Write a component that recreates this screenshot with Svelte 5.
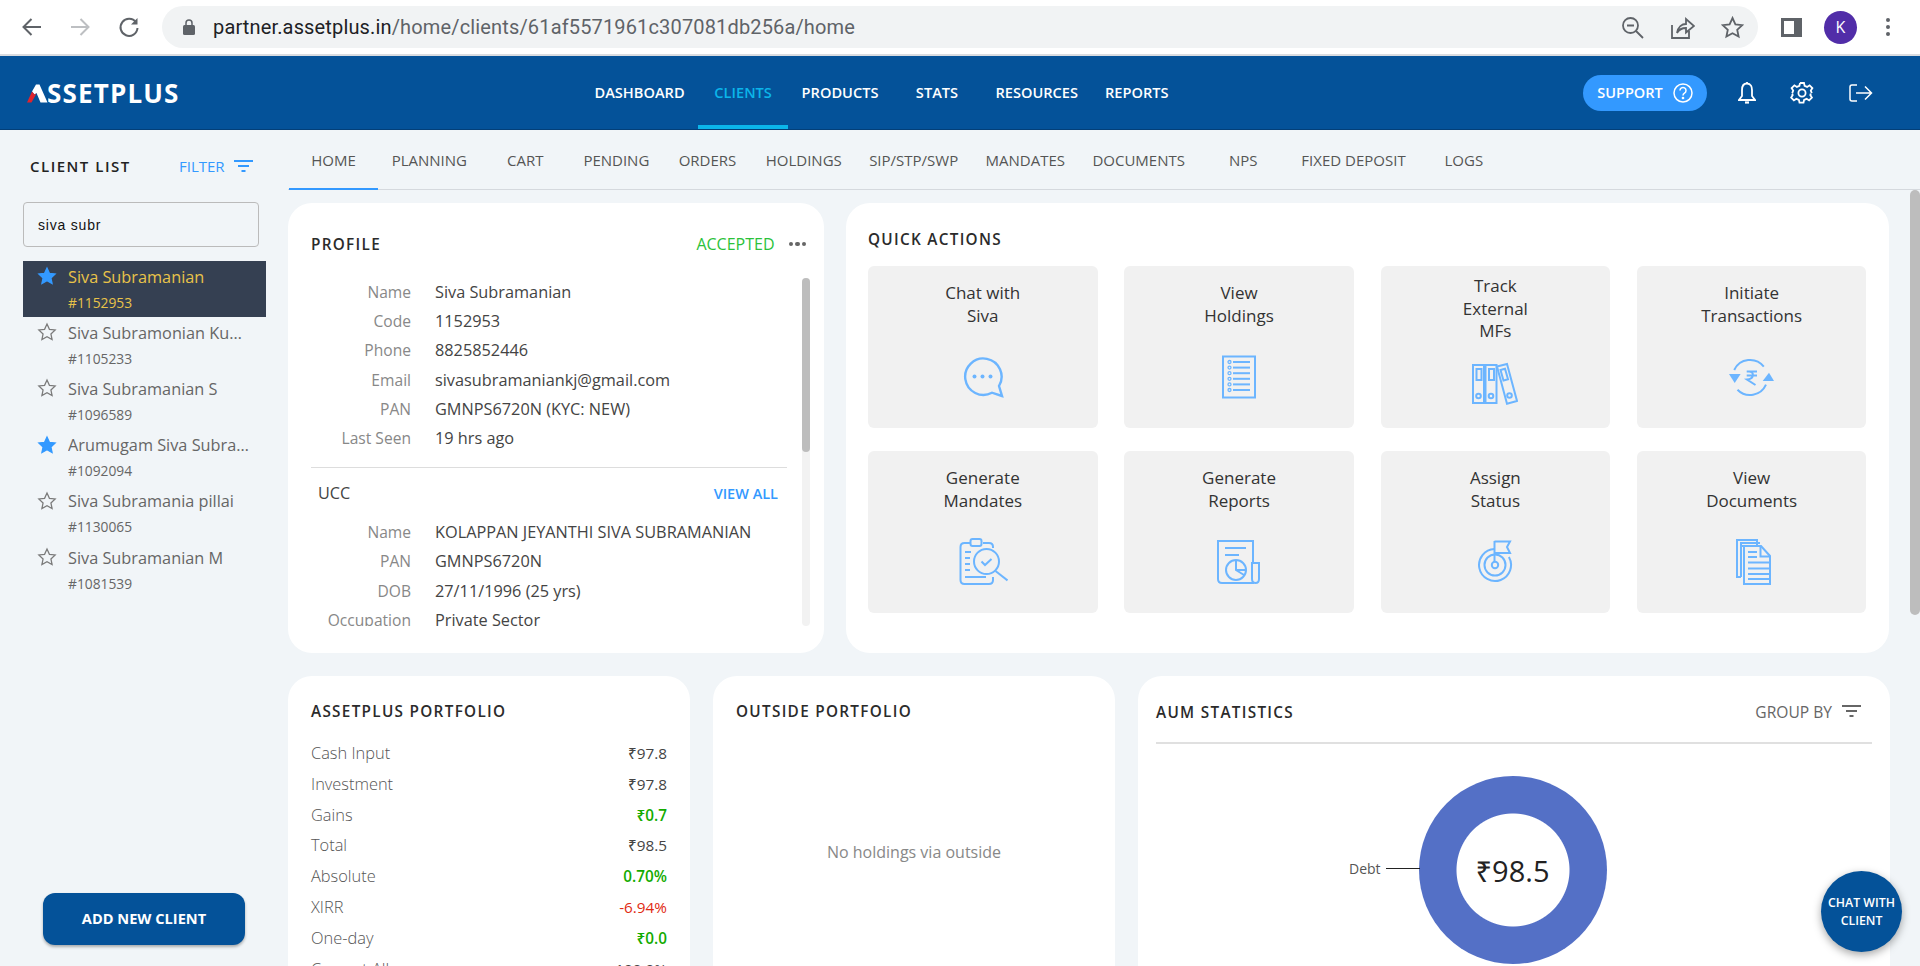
<script>
  const navItems = ['DASHBOARD', 'CLIENTS', 'PRODUCTS', 'STATS', 'RESOURCES', 'REPORTS'];
  const tabs = ['HOME', 'PLANNING', 'CART', 'PENDING', 'ORDERS', 'HOLDINGS', 'SIP/STP/SWP', 'MANDATES', 'DOCUMENTS', 'NPS', 'FIXED DEPOSIT', 'LOGS'];
  const clients = [
    { name: 'Siva Subramanian', code: '#1152953', fav: true, active: true },
    { name: 'Siva Subramonian Kumar', code: '#1105233' },
    { name: 'Siva Subramanian S', code: '#1096589' },
    { name: 'Arumugam Siva Subramanian', code: '#1092094', fav: true },
    { name: 'Siva Subramania pillai', code: '#1130065' },
    { name: 'Siva Subramanian M', code: '#1081539' }
  ];
  const profile = [
    ['Name', 'Siva Subramanian'], ['Code', '1152953'], ['Phone', '8825852446'],
    ['Email', 'sivasubramaniankj@gmail.com'], ['PAN', 'GMNPS6720N (KYC: NEW)'], ['Last Seen', '19 hrs ago']
  ];
  const ucc = [
    ['Name', 'KOLAPPAN JEYANTHI SIVA SUBRAMANIAN'], ['PAN', 'GMNPS6720N'],
    ['DOB', '27/11/1996 (25 yrs)'], ['Occupation', 'Private Sector']
  ];
  const portfolio = [
    ['Cash Input', '₹97.8', ''], ['Investment', '₹97.8', ''], ['Gains', '₹0.7', 'up'], ['Total', '₹98.5', ''],
    ['Absolute', '0.70%', 'up'], ['XIRR', '-6.94%', 'down'], ['One-day', '₹0.0', 'up'], ['Current All', '100.0%', '']
  ];
</script>

{#snippet tile(lines, icon)}
  <button class="tile" class:three={lines.length === 3}>
    <span class="tile-label">{#each lines as l}<span>{l}</span>{/each}</span>
    <span class="tile-icon">{@render icon()}</span>
  </button>
{/snippet}

{#snippet filterIcon()}
  <svg width="19" height="13" viewBox="0 0 19 13" fill="currentColor"><rect y="0" width="19" height="2"/><rect x="4" y="5" width="11" height="2"/><rect x="7.5" y="10" width="4" height="2"/></svg>
{/snippet}

{#snippet chatIcon()}
  <svg width="44" height="44" viewBox="0 0 44 44" class="qi heavy"><path d="M41 41l-10-3.300A18.200 18.200 0 1 1 38 31z"/><circle cx="13.500" cy="21.500" r="2" class="dot"/><circle cx="21.500" cy="21.500" r="2" class="dot"/><circle cx="29.500" cy="21.500" r="2" class="dot"/></svg>
{/snippet}
{#snippet holdingsIcon()}
  <svg width="44" height="44" viewBox="0 0 44 44" class="qi"><rect x="6" y="1.500" width="32" height="41"/>
    {#each [7, 12.600, 18.200, 23.800, 29.400, 35] as y}<circle cx="12.500" cy={y} r="1.500" stroke-width="1.300"/><path d="M16 {y}H33" />{/each}
  </svg>
{/snippet}
{#snippet binderIcon()}
  <svg width="46" height="44" viewBox="0 0 46 44" class="qi" stroke-width="1.800"><rect x="1" y="3" width="11" height="38"/><rect x="13.500" y="3" width="11" height="38"/><path d="M25 4.500l10-2.500 10 37-10 2.800z"/><rect x="4.500" y="7" width="5" height="11"/><rect x="17" y="7" width="5" height="11"/><path d="M28.500 8l4.500-1.200 3 10.500-4.500 1.200z"/><circle cx="6.500" cy="34" r="2.300"/><circle cx="19" cy="34" r="2.300"/><circle cx="37.500" cy="33.500" r="2.300"/></svg>
{/snippet}
{#snippet txnIcon()}
  <svg width="46" height="44" viewBox="0 0 46 44" class="qi"><path d="M5.200 15A17.500 17.500 0 0 1 34.800 11.700"/><path d="M37 29.600A17.500 17.500 0 0 1 8.500 34.700"/><path d="M0 19H11.600L5.700 28z" class="fill"/><path d="M33.700 26H45L40 17.700z" class="fill"/><path d="M17.700 16.500H28M17.700 20.500H28M20 16.500c5.500 0 5.500 7.500-2 8L26.500 30"/></svg>
{/snippet}
{#snippet mandateIcon()}
  <svg width="50" height="50" viewBox="0 0 50 50" class="qi"><path d="M12 6H6.500Q2.500 6 2.500 10V43Q2.500 47 6.500 47H31Q35 47 35 43V40"/><path d="M25 6H31Q35 6 35 10V11"/><rect x="12.500" y="2" width="11" height="7" rx="2"/><circle cx="28.500" cy="24.500" r="12.500"/><path d="M23.500 24.500l3.500 3.500 6.500-6"/><path d="M37.500 34l12 9.500"/><path d="M7 15h6M7 21h5M7 27h5M7 33h5M7 40h21"/></svg>
{/snippet}
{#snippet reportIcon()}
  <svg width="46" height="46" viewBox="0 0 46 46" class="qi"><path d="M37 24V2H2V40Q2 44 6 44H38"/><path d="M36 24H43V40Q43 44 39.500 44Q36 44 36 40z"/><path d="M9 9H30M9 16H23"/><circle cx="20" cy="31" r="10"/><path d="M20 21V31L28 36"/><path d="M20 31H30"/></svg>
{/snippet}
{#snippet statusIcon()}
  <svg width="36" height="46" viewBox="0 0 36 46" class="qi"><path d="M17.500 2V23"/><path d="M17.500 2.500H33L30 8l3 6H17.500" /><path d="M17.500 10A16 16 0 1 0 31.900 18"/><circle cx="18" cy="26" r="10.500"/><circle cx="18" cy="26" r="3.200"/></svg>
{/snippet}
{#snippet docsIcon()}
  <svg width="42" height="48" viewBox="0 0 42 48" class="qi"><path d="M10 39H6V2H26V8"/><path d="M10 39V5H29"/><path d="M10 8H30L39 18V46H13V8z"/><path d="M29.500 8.500V18.500H39M17 14H26M17 19H26M17 24.500H38M17 30.500H38M17 36H38M17 41H38"/></svg>
{/snippet}

<div class="app">
  <div class="browser">
    <div class="browser-btns">
      <svg width="20" height="20" viewBox="0 0 20 20" class="cr"><path d="M19 10H2M9.500 2L1.500 10l8 8"/></svg>
      <svg width="20" height="20" viewBox="0 0 20 20" class="cr dim"><path d="M1 10H18M10.500 2l8 8-8 8"/></svg>
      <svg width="22" height="22" viewBox="0 0 22 22" class="cr"><path d="M18 6.500A8.500 8.500 0 1 0 19.500 12"/><path d="M19.500 2v6.500H13" fill="#5f6368" stroke="none"/></svg>
    </div>
    <div class="omnibox">
      <svg width="12" height="16" viewBox="0 0 12 16" fill="#5f6368"><rect y="6" width="12" height="10" rx="1.500"/><path d="M3 6.500V4a3 3 0 0 1 6 0v2.500" fill="none" stroke="#5f6368" stroke-width="1.500"/></svg>
      <span class="url">partner.assetplus.in<span class="url-path">/home/clients/61af5571961c307081db256a/home</span></span>
      <span class="omni-icons">
        <svg width="23" height="23" viewBox="0 0 23 23" class="cr thin"><circle cx="9.500" cy="9.500" r="7.500"/><path d="M15 15l7 7M6 9.500h7"/></svg>
        <svg width="25" height="23" viewBox="0 0 25 23" class="cr thin"><path d="M2 9V22H19V15"/><path d="M7 17C8 11 12 8 16 8V3L24 10L16 16.500V12C12 12 9 13.500 7 17z"/></svg>
        <svg width="23" height="23" viewBox="0 0 23 23" class="cr thin"><path d="M11.500 2l2.900 6.300 6.900.8-5.100 4.700 1.400 6.800-6.100-3.400-6.100 3.400 1.400-6.800L1.700 9.100l6.900-.8z"/></svg>
      </span>
    </div>
    <svg width="21" height="21" viewBox="0 0 21 21" class="side-ic"><path fill-rule="evenodd" d="M0 1H21V20H0zM3 4V17H13V4z"/></svg>
    <span class="avatar">K</span>
    <svg width="6" height="22" viewBox="0 0 6 22" fill="#5f6368" class="kebab"><circle cx="3" cy="4" r="2"/><circle cx="3" cy="11" r="2"/><circle cx="3" cy="18" r="2"/></svg>
  </div>

  <header class="header">
    <div class="logo">
      <span class="logo-text">ASSETPLUS</span>
      <svg class="logo-mark" width="21" height="19" viewBox="0 0 21 19"><rect width="21" height="19" fill="#045299"/><path d="M9 0.500H12.500L20.500 18.500H13.500L9.500 9 7.500 10.500 5 7.500z" fill="#fff"/><path d="M0 18.500L5 7.500 7.500 10.500 9.500 9.500 4.500 18.500z" fill="#e1242d"/></svg>
    </div>
    <nav class="nav">
      {#each navItems as item}
        <a class="nav-item" class:active={item === 'CLIENTS'} href="#top">{item}</a>
      {/each}
    </nav>
    <div class="head-right">
      <button class="support">SUPPORT
        <svg width="20" height="20" viewBox="0 0 20 20" fill="none" stroke="#fff" stroke-width="1.500"><circle cx="10" cy="10" r="9"/><path d="M7 7.500a3 3 0 1 1 4.500 2.600c-1 .6-1.500 1.200-1.500 2.400"/><circle cx="10" cy="15" r=".6" fill="#fff"/></svg>
      </button>
      <svg class="hi bell" width="18" height="24" viewBox="0 0 18 24"><path d="M9 2.500C5 2.500 4 6 4 9V15L1 19H17L14 15V9C14 6 13 2.500 9 2.500z"/><path d="M7 21.500h4" stroke-width="2.200"/><path d="M9 1V2.500"/></svg>
      <svg class="hi gear" width="24" height="24" viewBox="0 0 24 24"><circle cx="12" cy="12" r="3.600"/><path d="M10 2h4l.6 2.900 2.500 1 2.500-1.600 2.800 2.800-1.600 2.500 1 2.500 0 0M10 2L9.400 4.900l-2.500 1-2.500-1.600-2.800 2.800 1.600 2.500-1 2.500M2.200 12.600l.5 1.500-1.600 2.500 2.800 2.800 2.500-1.600 2.500 1 .6 2.900h4l.6-2.900 2.500-1 2.500 1.600 2.800-2.800-1.600-2.500.5-1.500"/></svg>
      <svg class="hi out" width="24" height="20" viewBox="0 0 24 20"><path d="M8 2H3Q1 2 1 4V16Q1 18 3 18H8"/><path d="M7 10H22M16 3.500L22.500 10 16 16.500"/></svg>
    </div>
  </header>

  <div class="body">
    <aside class="side">
      <div class="side-head">
        <span class="side-title">CLIENT LIST</span>
        <span class="filter">FILTER {@render filterIcon()}</span>
      </div>
      <input class="search" value="siva subr" aria-label="Search clients" />
      <ul class="clients">
        {#each clients as c}
          <li class="client" class:sel={c.active}>
            <svg width="20" height="20" viewBox="0 0 24 24" class="star" class:fav={c.fav}><path d="M12 2.500l2.900 6.300 6.900.8-5.100 4.700 1.400 6.800-6.100-3.400-6.100 3.400 1.400-6.800-5.100-4.700 6.900-.8z"/></svg>
            <div class="client-text">
              <div class="client-name">{c.name}</div>
              <div class="client-code">{c.code}</div>
            </div>
          </li>
        {/each}
      </ul>
      <button class="add">ADD NEW CLIENT</button>
    </aside>

    <main class="main">
      <div class="tabs">
        {#each tabs as t}
          <a class="tab" class:on={t === 'HOME'} href="#top">{t}</a>
        {/each}
      </div>
      <div class="scroll">
        <div class="content">
          <div class="row-top">
            <section class="card profile">
              <div class="card-head">
                <h2>PROFILE</h2>
                <div class="status"><span class="accepted">ACCEPTED</span><span class="dots"><i></i><i></i><i></i></span></div>
              </div>
              <div class="profile-body">
                <div class="profile-rows">
                  <div class="kv">
                    {#each profile as [k, v]}<span class="k">{k}</span><span class="v">{v}</span>{/each}
                  </div>
                  <div class="sep"></div>
                  <div class="ucc-head"><span>UCC</span><a href="#top">VIEW ALL</a></div>
                  <div class="kv">
                    {#each ucc as [k, v]}<span class="k">{k}</span><span class="v">{v}</span>{/each}
                  </div>
                </div>
                <div class="mini-track"><div class="mini-thumb"></div></div>
              </div>
            </section>
            <section class="card quick">
              <h2>QUICK ACTIONS</h2>
              <div class="tiles">
                {@render tile(['Chat with', 'Siva'], chatIcon)}
                {@render tile(['View', 'Holdings'], holdingsIcon)}
                {@render tile(['Track', 'External', 'MFs'], binderIcon)}
                {@render tile(['Initiate', 'Transactions'], txnIcon)}
                {@render tile(['Generate', 'Mandates'], mandateIcon)}
                {@render tile(['Generate', 'Reports'], reportIcon)}
                {@render tile(['Assign', 'Status'], statusIcon)}
                {@render tile(['View', 'Documents'], docsIcon)}
              </div>
            </section>
          </div>
          <div class="row-bottom">
            <section class="card portfolio">
              <h2>ASSETPLUS PORTFOLIO</h2>
              <div class="pf-rows">
                {#each portfolio as [k, v, tone]}
                  <div class="pf-row"><span class="pf-k">{k}</span><span class="pf-v {tone}">{v}</span></div>
                {/each}
              </div>
            </section>
            <section class="card outside">
              <h2>OUTSIDE PORTFOLIO</h2>
              <p class="empty">No holdings via outside</p>
            </section>
            <section class="card aum">
              <div class="aum-head">
                <h2>AUM STATISTICS</h2>
                <span class="group">GROUP BY {@render filterIcon()}</span>
              </div>
              <div class="chart">
                <div class="debt"><span>Debt</span><i></i></div>
                <div class="donut"><span>₹98.5</span></div>
              </div>
            </section>
          </div>
        </div>
        <div class="track"><div class="thumb"></div></div>
      </div>
    </main>
  </div>
  <button class="chat-fab">CHAT WITH<br />CLIENT</button>
</div>

<style>
  :global(body) { margin: 0; overflow: hidden; background: #f1f5f8; }
  .app { position: relative; width: 1920px; height: 966px; display: flex; flex-direction: column; overflow: hidden; font-family: "Open Sans", "Noto Sans", sans-serif; color: #333; background: #f1f5f8; }
  a { text-decoration: none; color: inherit; }
  button { font-family: inherit; border: none; cursor: pointer; padding: 0; }

  .browser { height: 54px; border-bottom: 2px solid #dadce0; background: #fff; display: flex; align-items: center; flex: none; box-sizing: content-box; }
  .browser-btns { display: flex; align-items: center; gap: 28px; padding-left: 22px; width: 162px; box-sizing: border-box; }
  .cr { fill: none; stroke: #5f6368; stroke-width: 2; }
  .cr.dim { stroke: #bdbfc2; }
  .cr.thin { stroke-width: 1.800; }
  .omnibox { width: 1596px; height: 42px; border-radius: 21px; background: #f1f3f4; display: flex; align-items: center; padding-left: 21px; box-sizing: border-box; }
  .url { margin-left: 18px; font-family: Roboto, sans-serif; font-size: 20px; color: #202124; letter-spacing: .15px; }
  .url-path { color: #5f6368; }
  .omni-icons { margin-left: auto; margin-right: 14px; display: flex; align-items: center; gap: 26px; }
  .side-ic { margin-left: 23px; fill: #5f6368; }
  .avatar { margin-left: 22px; width: 33px; height: 33px; border-radius: 50%; background: #512da8; color: #fff; font-size: 16px; display: flex; align-items: center; justify-content: center; }
  .kebab { margin-left: 28px; }

  .header { height: 74px; background: #045299; display: flex; align-items: stretch; flex: none; border-bottom: 1px solid #033f78; box-sizing: border-box; }
  .logo { width: 581px; padding-left: 28px; box-sizing: border-box; display: flex; align-items: center; position: relative; }
  .logo-text { font-size: 26px; font-weight: 700; color: #fff; letter-spacing: 1.150px; line-height: 1; }
  .logo-mark { position: absolute; left: 27px; top: 28px; }
  .nav { display: flex; }
  .nav-item { min-width: 90px; padding: 0 13.500px; box-sizing: border-box; text-align: center; font-size: 14.600px; font-weight: 600; color: #fff; line-height: 72px; border-bottom: 4px solid transparent; height: 73px; white-space: nowrap; }
  .nav-item.active { color: #0bb5ea; border-bottom-color: #0bb5ea; }
  .head-right { margin-left: auto; display: flex; align-items: center; padding-right: 47px; }
  .support { width: 124px; height: 36px; border-radius: 18px; background: #3399ff; color: #fff; font-size: 14.500px; font-weight: 600; display: flex; align-items: center; justify-content: center; gap: 10px; }
  .hi { fill: none; stroke: #fff; stroke-width: 1.800; }
  .bell { margin-left: 31px; }
  .gear { margin-left: 34px; }
  .out { margin-left: 35px; stroke-width: 1.500; }

  .body { flex: 1; display: flex; min-height: 0; }
  .side { width: 288px; flex: none; display: flex; flex-direction: column; padding: 0 0 21px 23px; box-sizing: border-box; }
  .side-head { height: 72px; display: flex; align-items: center; padding-left: 7px; }
  .side-title { font-size: 15px; font-weight: 600; letter-spacing: 1.500px; color: #222; width: 149px; white-space: nowrap; }
  .filter { font-size: 15px; color: #3399ff; display: inline-flex; align-items: center; gap: 9px; }
  .search { width: 236px; height: 45px; box-sizing: border-box; border: 1px solid #bbb; border-radius: 4px; background: transparent; padding: 0 14px; font-family: "Liberation Sans", sans-serif; font-size: 14px; letter-spacing: .8px; color: #111; outline: none; }
  .clients { list-style: none; margin: 14px 0 0; padding: 0; width: 243px; }
  .client { height: 56.200px; display: flex; align-items: center; padding-left: 14px; box-sizing: border-box; gap: 11px; color: #666; }
  .client.sel { background: #354052; color: #e9c349; }
  .star { align-self: flex-start; margin-top: 5px; flex: none; fill: none; stroke: #7a7a7a; stroke-width: 1.500; }
  .star.fav { fill: #3399ff; stroke: #3399ff; }
  .client-text { min-width: 0; flex: 1; padding-right: 14px; }
  .client-name { font-size: 16.300px; line-height: 26px; white-space: nowrap; overflow: hidden; text-overflow: ellipsis; }
  .client-code { font-size: 13.800px; line-height: 25px; }
  .add { margin-top: auto; margin-left: 20px; width: 202px; height: 52px; border-radius: 12px; background: #045299; color: #fff; font-weight: 700; font-size: 14.600px; padding-bottom: 2px; box-shadow: 0 2px 3px rgba(0, 0, 0, .3); }

  .main { flex: 1; min-width: 0; display: flex; flex-direction: column; }
  .tabs { height: 60px; flex: none; display: flex; border-bottom: 1px solid #d5d9de; box-sizing: border-box; padding-left: 1px; }
  .tab { min-width: 89px; padding: 0 13.700px; box-sizing: border-box; text-align: center; font-size: 15px; color: #555; line-height: 61px; height: 60px; border-bottom: 2px solid transparent; white-space: nowrap; }
  .tab.on { border-bottom-color: #3399ff; }
  .scroll { flex: 1; display: flex; min-height: 0; }
  .content { flex: 1; min-width: 0; padding: 13px 0 0; overflow: hidden; }
  .track { width: 10px; background: #f1f5f8; flex: none; }
  .thumb { height: 425px; background: #bdbdbd; border-radius: 5px; }

  .row-top { display: grid; grid-template-columns: 536px 1043px; column-gap: 22px; height: 450px; }
  .row-bottom { display: grid; grid-template-columns: 402px 402px 752px; column-gap: 23px; margin-top: 23px; }
  .card { background: #fff; border-radius: 24px; box-sizing: border-box; }
  h2 { margin: 0; font-size: 15.300px; font-weight: 600; letter-spacing: 1.300px; color: #2b2b2b; white-space: nowrap; }

  .profile { padding: 31px 14px 0 23px; }
  .card-head { display: flex; justify-content: space-between; align-items: center; padding-right: 4px; height: 20px; }
  .status { display: flex; align-items: center; gap: 14px; }
  .accepted { font-size: 16px; color: #2bc23a; }
  .dots { display: flex; gap: 2px; }
  .dots i { width: 4.500px; height: 4.500px; border-radius: 50%; background: #666; }
  .profile-body { display: flex; height: 348px; margin-top: 24px; }
  .profile-rows { width: 476px; overflow: hidden; }
  .mini-track { width: 8px; margin-left: 15px; background: #f2f2f2; border-radius: 4px; }
  .mini-thumb { height: 174px; border-radius: 4px; background: #bdbdbd; }
  .kv { display: grid; grid-template-columns: 100px 1fr; column-gap: 24px; font-size: 16.300px; line-height: 29.200px; }
  .k { color: #888; text-align: right; white-space: nowrap; font-size: 15.600px; }
  .v { color: #444; white-space: nowrap; }
  .sep { height: 1px; background: #ddd; margin: 14px 0 0; }
  .ucc-head { display: flex; justify-content: space-between; align-items: center; height: 50px; padding: 0 9px 0 7px; font-size: 16.200px; color: #444; }
  .ucc-head a { color: #3399ff; font-size: 14.500px; font-weight: 600; }

  .quick { padding: 24px 23px 0 22px; }
  .quick h2 { line-height: 24px; }
  .tiles { margin-top: 15px; display: grid; grid-template-columns: repeat(4, 229.500px); grid-auto-rows: 162px; column-gap: 26.800px; row-gap: 23px; }
  .tile { background: #f1f1f1; border-radius: 6px; display: flex; flex-direction: column; align-items: center; color: #333; }
  .tile-label { height: 77px; display: flex; flex-direction: column; justify-content: center; font-size: 17px; line-height: 22.800px; }
  .tile-icon { height: 50px; margin-top: 9px; display: flex; align-items: center; justify-content: center; }
  .three .tile-label { padding-top: 9px; box-sizing: content-box; height: 68px; }
  .three .tile-icon { margin-top: 16px; }
  .qi { fill: none; stroke: #6cb5ff; stroke-width: 2; }
  .qi.heavy { stroke-width: 2.400; }
  .qi .dot, .qi .fill { fill: #6cb5ff; stroke: none; }

  .portfolio { padding: 25px 23px 0; height: 400px; }
  .portfolio h2 { line-height: 20px; }
  .pf-rows { margin-top: 17px; }
  .pf-row { display: flex; justify-content: space-between; font-size: 15.300px; line-height: 30.800px; color: #555; }
  .pf-k { font-size: 16.400px; font-weight: 300; }
  .pf-v { color: #444; }
  .pf-v.up { color: #13ab00; font-weight: 600; }
  .pf-v.down { color: #e12a12; }
  .outside { padding: 25px 23px 0; height: 400px; }
  .outside h2 { line-height: 20px; }
  .empty { margin: 0; text-align: center; font-size: 16px; color: #888; padding-top: 120px; line-height: 22px; }
  .aum { padding: 25px 18px 0; height: 400px; }
  .aum-head { display: flex; justify-content: space-between; align-items: center; height: 21px; padding-right: 11px; padding-bottom: 20px; border-bottom: 2px solid #e0e0e0; }
  .group { font-size: 15.600px; color: #666; display: inline-flex; align-items: center; gap: 10px; }
  .chart { display: flex; justify-content: center; margin-top: 32px; position: relative; padding-right: 3px; }
  .donut { width: 188px; height: 188px; border-radius: 50%; background: radial-gradient(circle, #fff 56px, #5470c6 57px); display: flex; align-items: center; justify-content: center; font-size: 29px; color: #222; flex: none; }
  .debt { position: absolute; left: 193px; top: 83px; display: flex; align-items: center; gap: 5px; font-size: 14px; color: #555; }
  .debt i { width: 34px; height: 1px; background: #222; }
  .chat-fab { position: absolute; left: 1821px; top: 871px; width: 81px; height: 81px; border-radius: 50%; background: #045299; color: #fff; font-size: 12.300px; font-weight: 600; line-height: 18px; box-shadow: 0 3px 8px rgba(0, 0, 0, .35); }
</style>
